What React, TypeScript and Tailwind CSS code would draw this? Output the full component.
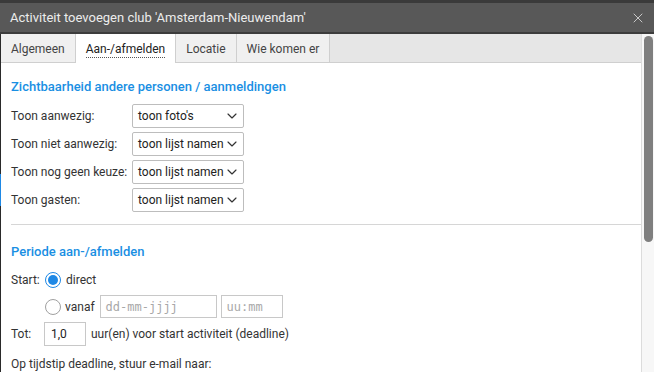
import type React from 'react';
import { X, ChevronDown } from 'lucide-react';

const FONT = { fontFamily: 'Roboto, "Liberation Sans", sans-serif' };

const TABS = ['Algemeen', 'Aan-/afmelden', 'Locatie', 'Wie komen er'];

const ROWS = [
  { label: 'Toon aanwezig:', value: "toon foto's" },
  { label: 'Toon niet aanwezig:', value: 'toon lijst namen' },
  { label: 'Toon nog geen keuze:', value: 'toon lijst namen' },
  { label: 'Toon gasten:', value: 'toon lijst namen' },
];

function Select({ value }: { value: string }): React.ReactElement {
  return (
    <div className="flex h-[24px] w-[112px] items-center justify-between rounded-[2px] border border-[#bdbdbd] bg-white pl-[5px] pr-[3px] text-[12px] text-[#222]">
      <span className="whitespace-nowrap">{value}</span>
      <ChevronDown className="h-[16px] w-[16px] text-[#333]" strokeWidth={1.75} />
    </div>
  );
}

function Radio({ checked }: { checked?: boolean }): React.ReactElement {
  return (
    <span
      className={
        checked
          ? 'flex h-[16px] w-[16px] items-center justify-center rounded-full border border-[#1e88e5] bg-white'
          : 'flex h-[16px] w-[16px] items-center justify-center rounded-full border border-[#a0a0a0] bg-white'
      }
    >
      {checked && <span className="h-[10px] w-[10px] rounded-full bg-[#1e88e5]" />}
    </span>
  );
}

export default function App(): React.ReactElement {
  return (
    <div className="flex h-[372px] w-[654px] flex-col overflow-hidden bg-[#3a3a3a]" style={FONT}>
      {/* title bar */}
      <div className="mt-[3px] flex h-[31px] shrink-0 items-center justify-between border-b-2 border-[#3c3c3c] bg-[#585858] pl-[10px] pr-[8px]">
        <span className="text-[13px] text-[#ececec]">Activiteit toevoegen club 'Amsterdam-Nieuwendam'</span>
        <X className="h-[16px] w-[16px] text-[#c8c8c8]" strokeWidth={1.5} />
      </div>

      <div className="flex min-h-0 flex-1">
        {/* background peeking at the left edge */}
        <div className="flex w-[1px] flex-col bg-[#2a2a2a]">
          <div className="h-[140px]" />
          <div className="h-[32px] bg-[#1e88e5]" />
        </div>

        <div className="flex min-w-0 flex-1 flex-col bg-white">
          {/* tabs */}
          <div className="flex h-[29px] shrink-0 border-b border-[#cfcfcf] bg-[#e6e6e6]">
            {TABS.map((t, i) =>
              i === 1 ? (
                <div
                  key={t}
                  className="-mb-px flex items-center border-r border-[#cfcfcf] bg-white px-[10px] pt-[2px] text-[12px] text-[#222]"
                >
                  <span className="border-b border-dotted border-[#555] leading-[15px]">{t}</span>
                </div>
              ) : (
                <div
                  key={t}
                  className="flex items-center border-r border-[#cfcfcf] bg-[#f0f0f0] px-[10px] pt-[2px] text-[12px] text-[#444]"
                >
                  {t}
                </div>
              ),
            )}
          </div>

          {/* content */}
          <div className="flex flex-col pl-[10px] text-[12px] text-[#333]">
            <h2 className="mt-[16px] text-[13px] leading-[16px] font-medium text-[#1a8fe3]">
              Zichtbaarheid andere personen / aanmeldingen
            </h2>
            <div className="mt-[9px] flex flex-col gap-[4px]">
              {ROWS.map((r) => (
                <div key={r.label} className="flex items-center">
                  <span className="w-[121px] whitespace-nowrap">{r.label}</span>
                  <Select value={r.value} />
                </div>
              ))}
            </div>

            <div className="mt-[12px] border-t border-[#d6d6d6]" />

            <h2 className="mt-[19px] text-[13px] leading-[16px] font-medium text-[#1a8fe3]">Periode aan-/afmelden</h2>

            <div className="mt-[11px] flex h-[18px] items-center">
              <span className="w-[34px]">Start:</span>
              <Radio checked />
              <span className="ml-[5px]">direct</span>
            </div>
            <div className="mt-[6px] flex items-center pl-[34px]">
              <Radio />
              <span className="ml-[4px]">vanaf</span>
              <div
                className="ml-[5px] flex h-[23px] w-[117px] items-center border border-[#c8c8c8] pl-[5px] text-[12px] text-[#a8a8a8]"
                style={{ fontFamily: '"DejaVu Sans Mono", monospace' }}
              >
                dd-mm-jjjj
              </div>
              <div
                className="ml-[4px] flex h-[23px] w-[62px] items-center border border-[#c8c8c8] pl-[5px] text-[12px] text-[#a8a8a8]"
                style={{ fontFamily: '"DejaVu Sans Mono", monospace' }}
              >
                uu:mm
              </div>
            </div>
            <div className="mt-[4px] flex items-center">
              <span className="w-[33px]">Tot:</span>
              <div className="flex h-[24px] w-[42px] items-center border border-[#c8c8c8] pl-[6px] text-[#222]">1,0</div>
              <span className="ml-[5px]">uur(en) voor start activiteit (deadline)</span>
            </div>
            <div className="mt-[10px] leading-[16px]">Op tijdstip deadline, stuur e-mail naar:</div>
          </div>
        </div>

        {/* scrollbar */}
        <div className="w-[13px] border-l border-[#dcdcdc] bg-[#f7f7f7] pl-[2px] pt-[2px]">
          <div className="h-[206px] w-[9px] rounded-[5px] bg-[#7f7f7f]" />
        </div>
      </div>
    </div>
  );
}
